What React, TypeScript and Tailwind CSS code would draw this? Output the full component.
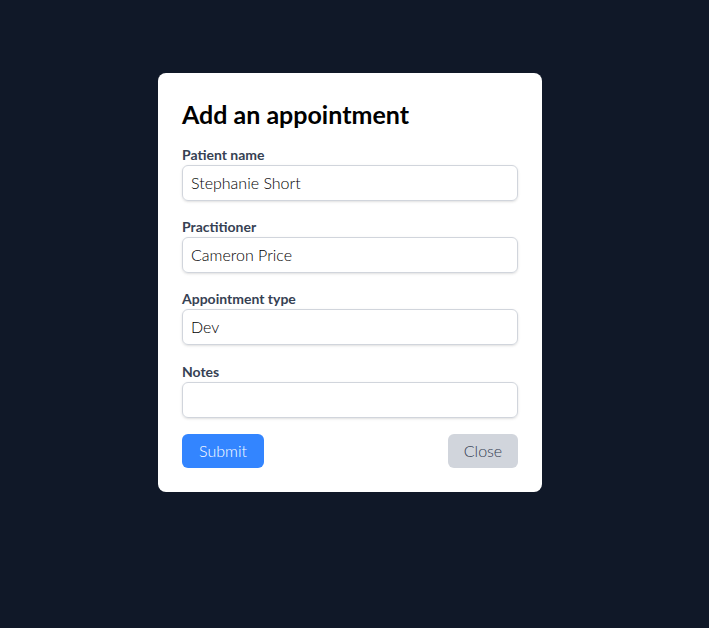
export default function App() {
  const fields = [
    { label: 'Patient name', value: 'Stephanie Short' },
    { label: 'Practitioner', value: 'Cameron Price' },
    { label: 'Appointment type', value: 'Dev' },
    { label: 'Notes', value: '' },
  ];

  return (
    <div className="min-h-screen bg-gray-900 flex justify-center pt-[73px] pr-[9px] font-['Lato',sans-serif]">
      <div className="w-96 h-fit bg-white rounded-lg p-6">
        <h2 className="text-[25px] leading-8 font-bold text-black pt-px mb-[15px]">Add an appointment</h2>

        {fields.map(f => (
          <div key={f.label} className={f.label === 'Notes' ? 'pt-px mb-4' : 'mb-4'}>
            <label className="block text-sm font-bold text-gray-700">{f.label}</label>
            <input
              type="text"
              defaultValue={f.value}
              className="block w-full h-9 px-2 pb-px border border-gray-300 rounded-md shadow-sm text-base font-light text-black outline-none"
            />
          </div>
        ))}

        <div className="flex justify-between">
          <button className="h-[34px] w-[82px] bg-[#3385ff] text-white font-light rounded-md">Submit</button>
          <button className="h-[34px] w-[70px] bg-gray-300 text-gray-700 font-light rounded-md">Close</button>
        </div>
      </div>
    </div>
  );
}
